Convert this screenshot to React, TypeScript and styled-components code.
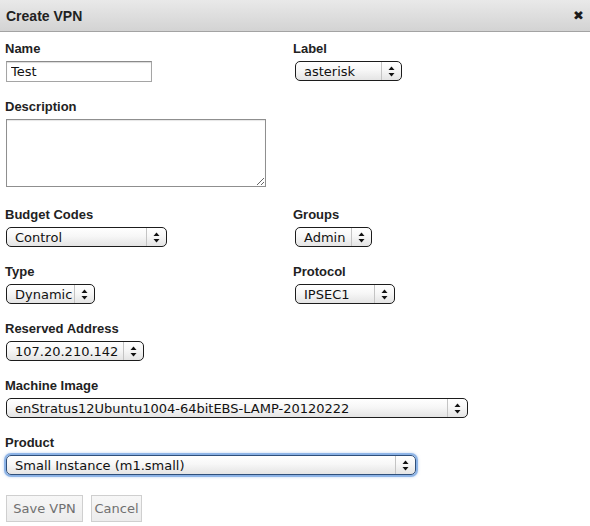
import React from 'react'
import styled, { createGlobalStyle } from 'styled-components'

const GlobalStyle = createGlobalStyle`
  html, body {
    margin: 0;
    padding: 0;
    background: #fff;
  }
  body {
    font-family: "Liberation Sans", Arial, sans-serif;
  }
`

interface ISelectProps {
  value: string
  width: number
  focused?: boolean
}

const Select: React.FC<ISelectProps> = (props) => {
  const { value, width, focused } = props
  return (
    <StyledSelect $width={width} $focused={focused}>
      <span className='value'>{value}</span>
      <span className='arrows'>
        <svg width='7' height='11' viewBox='0 0 7 11'>
          <path d='M3.5 0.5 L6.5 4 L0.5 4 Z' fill='#111' />
          <path d='M3.5 10.5 L6.5 7 L0.5 7 Z' fill='#111' />
        </svg>
      </span>
    </StyledSelect>
  )
}

const App: React.FC = () => {
  return (
    <>
      <GlobalStyle />
      <StyledDialog>
        <Header>
          <h1>Create VPN</h1>
          <CloseButton>✖</CloseButton>
        </Header>
        <Form>
          <Field>
            <Label>Name</Label>
            <TextInput defaultValue='Test' />
          </Field>
          <Field $col2>
            <Label>Label</Label>
            <Select value='asterisk' width={107} />
          </Field>
          <Field $full>
            <Label>Description</Label>
            <TextArea />
          </Field>
          <Field>
            <Label>Budget Codes</Label>
            <Select value='Control' width={161} />
          </Field>
          <Field $col2>
            <Label>Groups</Label>
            <Select value='Admin' width={77} />
          </Field>
          <Field>
            <Label>Type</Label>
            <Select value='Dynamic' width={89} />
          </Field>
          <Field $col2>
            <Label>Protocol</Label>
            <Select value='IPSEC1' width={100} />
          </Field>
          <Field $full>
            <Label>Reserved Address</Label>
            <Select value='107.20.210.142' width={138} />
          </Field>
          <Field $full>
            <Label>Machine Image</Label>
            <Select value='enStratus12Ubuntu1004-64bitEBS-LAMP-20120222' width={462} />
          </Field>
          <Field $full>
            <Label>Product</Label>
            <Select value='Small Instance (m1.small)' width={410} focused />
          </Field>
          <Actions>
            <Button $width={77}>Save VPN</Button>
            <Button $width={51}>Cancel</Button>
          </Actions>
        </Form>
      </StyledDialog>
    </>
  )
}

export default App

const StyledDialog = styled.div`
  width: 590px;
  height: 526px;
  background: #fff;
  overflow: hidden;
`

const Header = styled.div`
  height: 31px;
  display: flex;
  align-items: center;
  justify-content: space-between;
  padding: 0 6px 0 6px;
  background: linear-gradient(#e9e9e9, #d3d3d3);
  border-bottom: 1px solid #a3a3a3;

  h1 {
    margin: 0;
    font-size: 14px;
    font-weight: bold;
    color: #222;
    line-height: 16px;
    padding-top: 1px;
  }
`

const CloseButton = styled.span`
  font-family: "DejaVu Sans", sans-serif;
  font-size: 13px;
  color: #1a1a1a;
  line-height: 14px;
`

const Form = styled.div`
  display: grid;
  grid-template-columns: 288px 1fr;
  row-gap: 17px;
  padding: 9px 0 0 5px;
`

const Field = styled.div<{ $full?: boolean; $col2?: boolean }>`
  display: flex;
  flex-direction: column;
  align-items: flex-start;
  gap: 5px;
  grid-column: ${(p) => (p.$full ? '1 / -1' : 'auto')};

  & > div {
    margin-left: ${(p) => (p.$col2 ? '2px' : '1px')};
  }
`

const Label = styled.label`
  font-size: 13px;
  line-height: 15px;
  font-weight: bold;
  color: #222;
`

const TextInput = styled.input`
  box-sizing: border-box;
  width: 146px;
  height: 21px;
  margin: 0 0 0 1px;
  padding: 0 4px;
  border: 1px solid #a5a5a5;
  border-top-color: #8a8a8a;
  box-shadow: inset 0 1px 1px rgba(0, 0, 0, 0.15);
  font-family: "DejaVu Sans", sans-serif;
  font-size: 13px;
  color: #111;
  outline: none;
`

const TextArea = styled.textarea`
  box-sizing: border-box;
  width: 260px;
  height: 68px;
  margin: 0 0 3px 1px;
  border: 1px solid #8f8f8f;
  box-shadow: inset 0 1px 1px rgba(0, 0, 0, 0.1);
  font-family: "DejaVu Sans", sans-serif;
  font-size: 12px;
  outline: none;
`

const StyledSelect = styled.div<{ $width: number; $focused?: boolean }>`
  box-sizing: border-box;
  width: ${(p) => p.$width}px;
  height: 20px;
  display: flex;
  align-items: stretch;
  border: 1px solid ${(p) => (p.$focused ? '#2f4f7a' : '#1c1c1c')};
  border-radius: 5px;
  background: linear-gradient(#ffffff 0%, #f7f7f7 45%, #e4e4e4 100%);
  box-shadow: ${(p) =>
    p.$focused ? '0 0 0 2px rgba(120, 165, 225, 0.75), 0 0 3px 2px rgba(120, 165, 225, 0.5)' : 'none'};
  font-family: "DejaVu Sans", sans-serif;
  font-size: 13px;
  color: #111;

  .value {
    flex: 1;
    display: flex;
    align-items: center;
    padding-left: 8px;
    white-space: nowrap;
    overflow: hidden;
  }

  .arrows {
    width: 19px;
    display: flex;
    align-items: center;
    justify-content: center;
    border-left: 1px solid #c4c4c4;
  }
`

const Actions = styled.div`
  grid-column: 1 / -1;
  display: flex;
  gap: 8px;
  padding-left: 1px;
  margin-top: 3px;
`

const Button = styled.button<{ $width: number }>`
  box-sizing: border-box;
  width: ${(p) => p.$width}px;
  height: 27px;
  padding: 0;
  background: linear-gradient(#f7f7f7, #ececec);
  border: 1px solid #cfcfcf;
  color: #707070;
  font-family: "DejaVu Sans", sans-serif;
  font-size: 13px;
`
